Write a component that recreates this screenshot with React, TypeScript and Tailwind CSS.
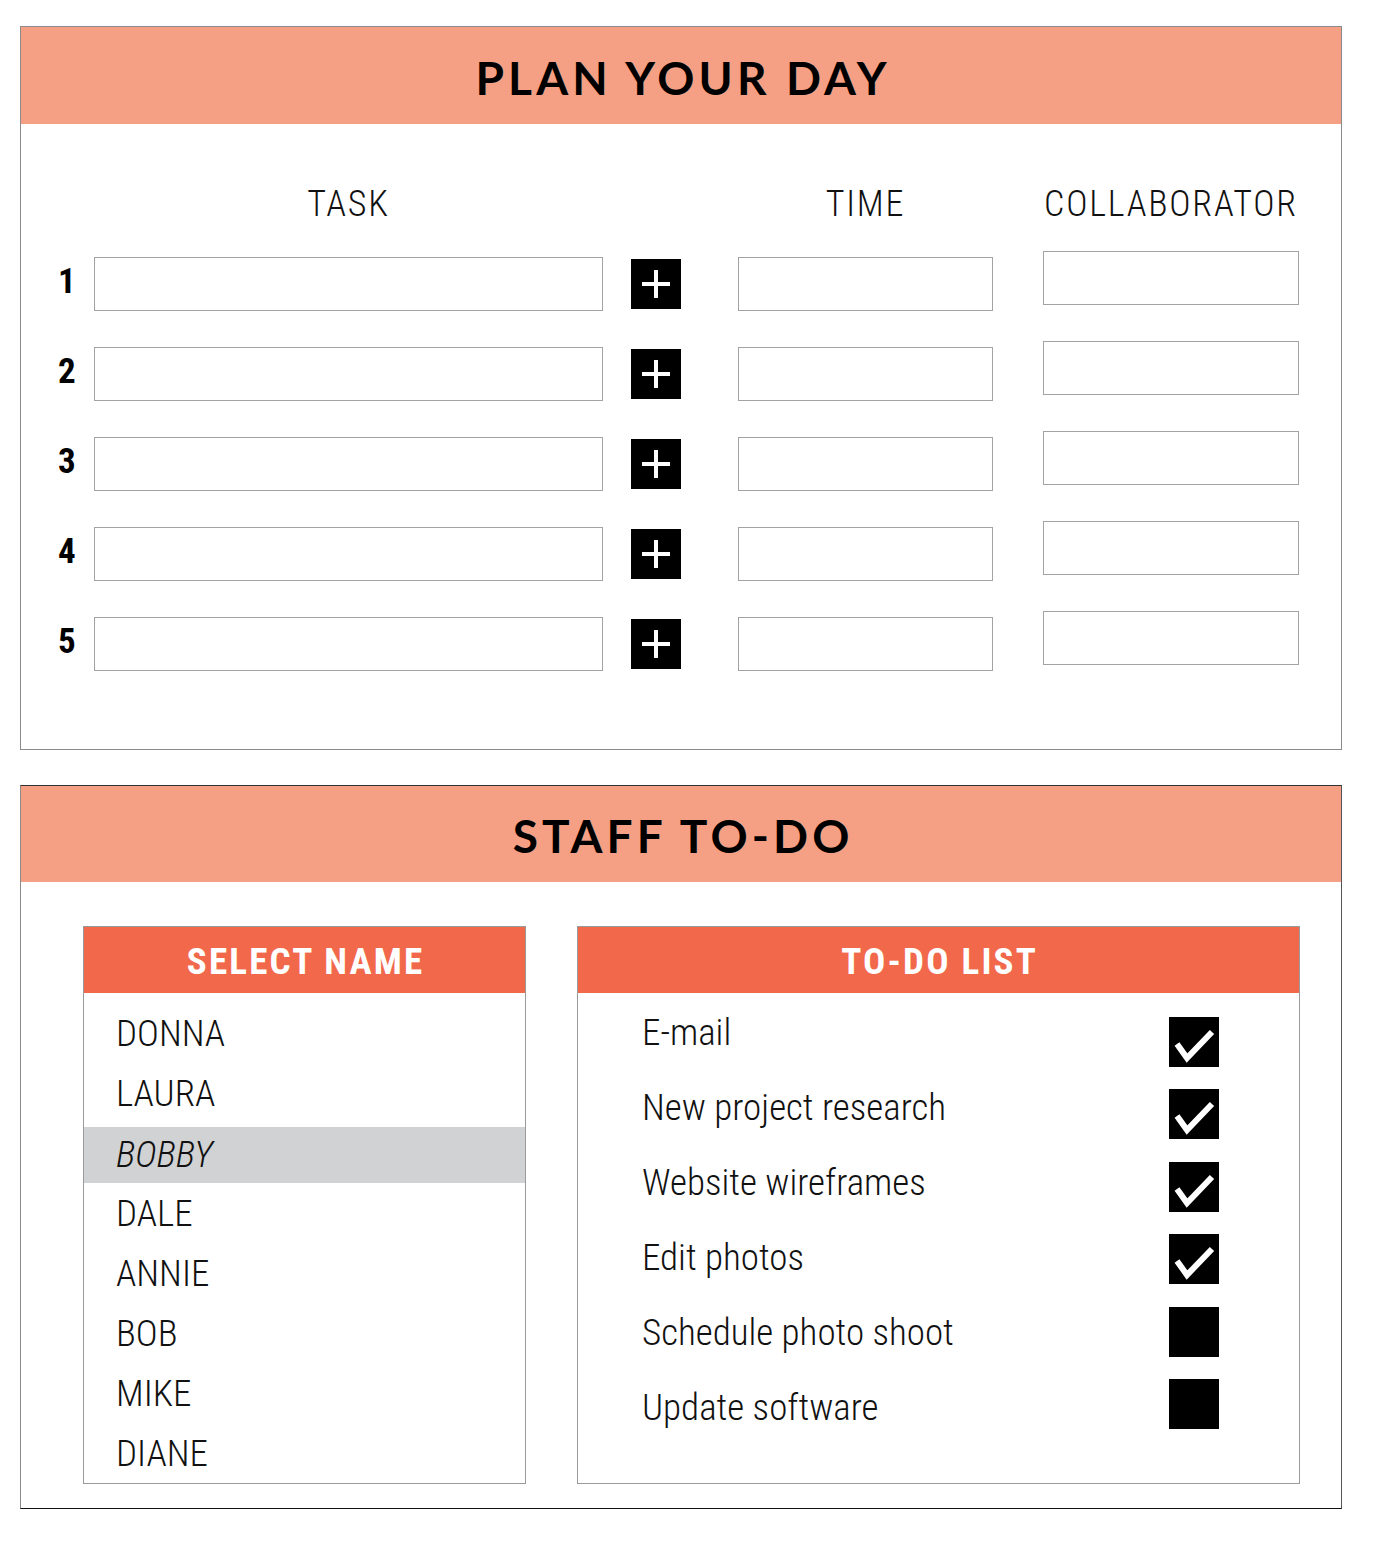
import React from "react";

const thin = "font-['Roboto_Condensed','Roboto',sans-serif] font-light";
const boldCond = "font-['Roboto_Condensed','Roboto',sans-serif] font-bold";
const title = "font-['Lato','Liberation_Sans',sans-serif] font-bold";

const rows = [1, 2, 3, 4, 5];
const names = ["DONNA", "LAURA", "BOBBY", "DALE", "ANNIE", "BOB", "MIKE", "DIANE"];
const todos = [
  { label: "E-mail", done: true },
  { label: "New project research", done: true },
  { label: "Website wireframes", done: true },
  { label: "Edit photos", done: true },
  { label: "Schedule photo shoot", done: false },
  { label: "Update software", done: false },
];

/** Bouton + noir */
function PlusButton() {
  return (
    <div className="w-[50px] h-[50px] bg-black flex items-center justify-center mt-[2px]">
      <svg width="30" height="30" viewBox="0 0 30 30">
        <rect x="13" y="1" width="4" height="28" fill="white" />
        <rect x="1" y="13" width="28" height="4" fill="white" />
      </svg>
    </div>
  );
}

/** Case à cocher */
function CheckBox({ done }: { done: boolean }) {
  return (
    <div className="w-[50px] h-[50px] bg-black">
      {done && (
        <svg width="50" height="50" viewBox="0 0 50 50">
          <polyline points="8,27 18,41 43,15" fill="none" stroke="white" strokeWidth="6" strokeLinejoin="miter" />
        </svg>
      )}
    </div>
  );
}

function PanelHeader({ children, h }: { children: React.ReactNode; h: string }) {
  return (
    <div className={`${h} bg-[#f5a084] flex items-center justify-center pt-[4px]`}>
      <h1 className={`${title} text-[46px] leading-none tracking-[0.09em] text-black pl-[0.09em]`}>{children}</h1>
    </div>
  );
}

function BoxHeader({ children }: { children: React.ReactNode }) {
  return (
    <div className="h-[66px] bg-[#f2684a] flex items-center justify-center pt-[2px]">
      <span className={`${boldCond} text-white text-[37px] leading-none tracking-[0.06em] pl-[0.06em]`}>{children}</span>
    </div>
  );
}

export default function App() {
  return (
    <div className="w-[1373px] h-[1542px] bg-white pt-[26px] pl-[20px]">
      {/* Plan your day */}
      <section className="w-[1322px] border border-[#8a8a8a] pb-[78px]">
        <PanelHeader h="h-[97px]">PLAN YOUR DAY</PanelHeader>

        <div className="pt-[50px] pl-[37px]">
          {/* Column labels */}
          <div className={`flex h-[60px] items-center ${thin} text-[36px] leading-none tracking-[0.05em] text-[#111]`}>
            <div className="w-[36px]" />
            <div className="w-[509px] text-center">TASK</div>
            <div className="w-[78px]" />
            <div className="w-[57px]" />
            <div className="w-[255px] text-center">TIME</div>
            <div className="w-[50px]" />
            <div className="w-[256px] text-center">COLLABORATOR</div>
          </div>

          <div className="mt-[23px] flex flex-col gap-[36px]">
            {rows.map((n) => (
              <div key={n} className="flex items-start h-[54px]">
                <div className={`w-[36px] h-[54px] flex items-center ${boldCond} text-[35px] leading-none text-black pb-[6px]`}>{n}</div>
                <div className="w-[509px] h-[54px] border border-[#a3a3a3] bg-white" />
                <div className="ml-[28px]">
                  <PlusButton />
                </div>
                <div className="ml-[57px] w-[255px] h-[54px] border border-[#a3a3a3] bg-white" />
                <div className="ml-[50px] -mt-[6px] w-[256px] h-[54px] border border-[#a3a3a3] bg-white" />
              </div>
            ))}
          </div>
        </div>
      </section>

      {/* Staff to-do */}
      <section className="mt-[35px] w-[1322px] border border-[#8a8a8a] border-t-[#333] border-b-[#111] border-r-[#555] pb-[24px]">
        <PanelHeader h="h-[96px]">STAFF TO-DO</PanelHeader>

        <div className="pt-[44px] pl-[62px] flex gap-[51px]">
          {/* Select name */}
          <div className="w-[443px] h-[558px] border border-[#9a9a9a] flex flex-col">
            <BoxHeader>SELECT NAME</BoxHeader>
            <ul className={`pt-[10px] ${thin} text-[37px] leading-none text-[#111]`}>
              {names.map((name) =>
                name === "BOBBY" ? (
                  <li key={name} className="h-[60px] pt-[4px]">
                    <div className="h-[56px] bg-[#d1d2d4] flex items-center pl-[32px] pb-[2px] italic">{name}</div>
                  </li>
                ) : (
                  <li key={name} className="h-[60px] flex items-center pl-[32px]">
                    {name}
                  </li>
                )
              )}
            </ul>
          </div>

          {/* To-do list */}
          <div className="w-[723px] h-[558px] border border-[#9a9a9a] flex flex-col">
            <BoxHeader>TO-DO LIST</BoxHeader>
            <div className="flex">
              <ul className={`pt-[2px] pl-[64px] ${thin} text-[37px] leading-none text-[#111]`}>
                {todos.map((t) => (
                  <li key={t.label} className="h-[75px] flex items-center">
                    {t.label}
                  </li>
                ))}
              </ul>
              <div className="ml-auto mr-[80px] pt-[24px] flex flex-col gap-[22.4px]">
                {todos.map((t) => (
                  <CheckBox key={t.label} done={t.done} />
                ))}
              </div>
            </div>
          </div>
        </div>
      </section>
    </div>
  );
}
